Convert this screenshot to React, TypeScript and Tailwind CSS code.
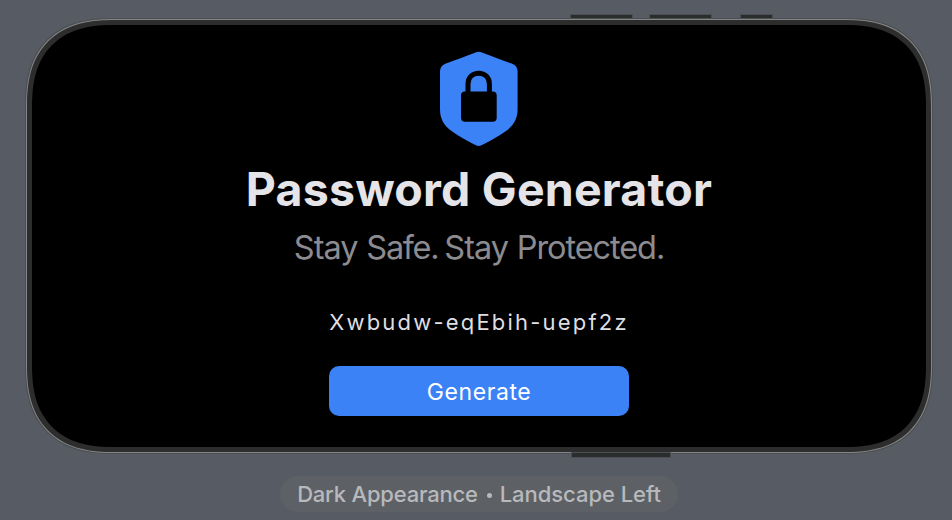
import React from "react";

function ShieldLock() {
  return (
    <svg width="78" height="96" viewBox="0 0 78 96" className="block" aria-hidden="true">
      <path
        d="M35.5 1.4Q38.7 0.2 41.9 1.4C51 5 63 9.2 72.2 12.8Q77.6 15.1 77.6 20.5V58C77.6 67.5 74 74.2 66 80C58.5 85.3 49 90.4 41.5 94.3Q38.7 95.7 35.9 94.3C28.4 90.4 18.9 85.3 11.5 80C3.5 74.2 0 67.5 0 58V20.5Q0 15.1 5.4 12.8C14.5 9.2 26.4 5 35.5 1.4Z"
        fill="#3b82f7"
      />
      <path d="M28 42V33C28 26.2 32.7 22.2 38.7 22.2S49.4 26.2 49.4 33V42" fill="none" stroke="#000" strokeWidth="5" />
      <rect x="21" y="40.4" width="35.7" height="30.4" rx="4" fill="#000" />
    </svg>
  );
}

export default function App() {
  return (
    <div className="flex h-[520px] w-[952px] flex-col items-center overflow-hidden bg-[#575c64] font-['Inter','Liberation_Sans',sans-serif]">
      <div className="flex h-[19px] w-full shrink-0 items-end pl-[571px]">
        <div className="h-[4px] w-[61px] bg-[#2b2c2c] shadow-[0_0_0_1px_#4b4e52]" />
        <div className="ml-[18px] h-[4px] w-[61px] bg-[#2b2c2c] shadow-[0_0_0_1px_#4b4e52]" />
        <div className="ml-[30px] h-[4px] w-[31px] bg-[#2b2c2c] shadow-[0_0_0_1px_#4b4e52]" />
      </div>
      <main className="ml-[6px] flex h-[434px] w-[906px] shrink-0 rounded-[75px] bg-[#858585] p-px shadow-[0_0_0_1px_#4b4e52] [corner-shape:superellipse(1.3)] supports-[corner-shape:squircle]:rounded-[88px]">
        <div className="flex flex-1 rounded-[74px] bg-[#2d2d2d] p-[5px] [corner-shape:superellipse(1.3)] supports-[corner-shape:squircle]:rounded-[87px]">
          <section className="flex flex-1 flex-col items-center rounded-[69px] bg-black pt-[26px] [corner-shape:superellipse(1.3)] supports-[corner-shape:squircle]:rounded-[82px]">
            <ShieldLock />
            <h1 className="mt-[13px] h-[58px] whitespace-nowrap text-[46.5px] font-bold leading-[58px] tracking-[0.2px] text-[#e5e4e9]">
              Password Generator
            </h1>
            <p className="mt-[9px] flex h-[42px] whitespace-nowrap text-[32.5px] leading-[42px] text-[#8b8b90]">
              <span className="w-[72.5px] tracking-[-1px]">Stay </span>
              <span className="w-[78px] tracking-[-1.3px]">Safe. </span>
              <span className="w-[72.5px] tracking-[-1px]">Stay </span>
              <span className="tracking-[-1.1px]">Protected.</span>
            </p>
            <p className="mt-[38px] h-[30px] whitespace-nowrap text-[22px] leading-[30px] tracking-[2.2px] text-[#dedee2]">
              Xwbudw-eqEbih-uepf2z
            </p>
            <button className="mt-[29px] flex h-[50px] w-[300px] items-center justify-center rounded-[10px] bg-[#3b82f7] pt-[2px] text-[23px] leading-[30px] tracking-[0.6px] text-white">
              Generate
            </button>
          </section>
        </div>
      </main>
      <div className="flex h-[5px] w-full shrink-0 pl-[572px]">
        <div className="h-[4px] w-[98px] bg-[#2b2c2c] shadow-[0_0_0_1px_#4b4e52]" />
      </div>
      <div className="ml-[6px] mt-[18px] flex h-[36px] w-[398px] shrink-0 items-center justify-center whitespace-nowrap rounded-full bg-[#5d6165] text-[22px] font-medium leading-[28px] text-[#b8b9bc]">
        <span className="tracking-[-0.2px]">Dark Appearance</span>
        <span className="ml-[9px] mr-[8px] mt-[2px] size-[5px] rounded-full bg-[#b8b9bc]" />
        <span className="tracking-[-0.05px]">Landscape Left</span>
      </div>
    </div>
  );
}
